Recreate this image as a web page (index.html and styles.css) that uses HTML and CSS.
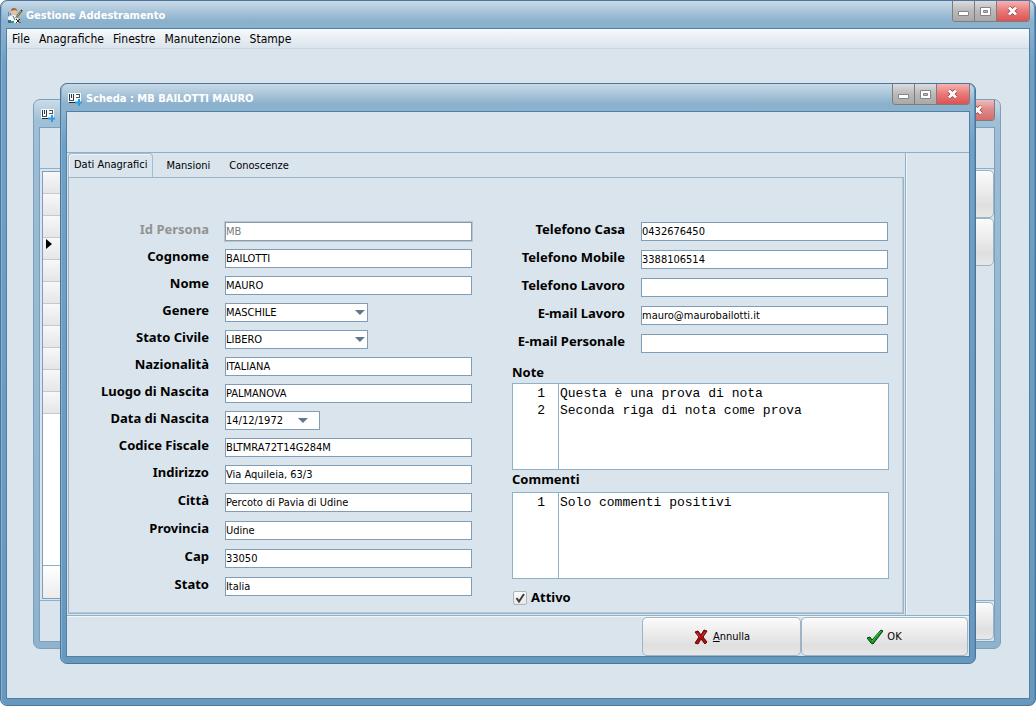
FILE: index.html
```html
<!DOCTYPE html>
<html lang="it">
<head>
    <meta charset="UTF-8">
    <title>Gestione Addestramento</title>
    <link rel="stylesheet" href="styles.css">
</head>
<body>

<div class="window app">
    <div class="title-bar">
        <svg class="title-icon" viewBox="0 0 16 16">
            <circle cx="7" cy="4" r="3" fill="#e9c19c"/>
            <path d="M4 3q0-3 3-3t3 3l-2-1z" fill="#a0673c"/>
            <path d="M3 8l4-1 4 1v7H3z" fill="#f4f7fa"/>
            <path d="M1 9l3-1v7H2z" fill="#fff"/>
            <path d="M15 2L9 10" stroke="#54401c" stroke-width="2"/>
            <path d="M14 3L9 10" stroke="#e0b64a"/>
            <path d="M1 12h3v3H1z" fill="#2a6fb0"/>
            <path d="M4 13h3v2H4z" fill="#3b9a45"/>
            <path d="M6 8l2 4" stroke="#3f6d9c"/>
            <path d="M9 11l4 4M13 11l-4 4" stroke="#23272c"/>
            <path d="M12 14h2v1h-2z" fill="#c23c2c"/>
            <path d="M1 7h1M3 6h1M1 5h1" stroke="#33475a"/>
        </svg>
        <h1 class="title-text">Gestione Addestramento</h1>
        <div class="title-buttons">
            <button class="win-btn" aria-label="Riduci a icona"><svg viewBox="0 0 12 12"><path d="M.5 6.5h10v4H.5z" fill="#fff" stroke="#858585"/></svg></button>
            <button class="win-btn" aria-label="Ingrandisci"><svg viewBox="0 0 12 12"><path d="M.5 2.5h10v8H.5z" fill="#fff" stroke="#858585"/><path d="M3.5 5.5h4v2h-4z" fill="#bbb" stroke="#858585"/></svg></button>
            <button class="win-btn close" aria-label="Chiudi"><svg viewBox="0 0 12 12"><path d="M2 2.5l7 7M9 2.5l-7 7" stroke="#8d3038" stroke-width="4"/><path d="M2 2.5l7 7M9 2.5l-7 7" stroke="#fff" stroke-width="3"/></svg></button>
        </div>
    </div>
    <div class="window-body">
        <nav class="menu-bar">
            <a href="#">File</a>
            <a href="#">Anagrafiche</a>
            <a href="#">Finestre</a>
            <a href="#">Manutenzione</a>
            <a href="#">Stampe</a>
        </nav>

        <div class="desktop">
            <!-- finestra elenco -->
            <div class="window list-window">
                <div class="title-bar">
                    <svg class="title-icon" viewBox="0 0 16 16">
                        <path d="M1 2h13v9H1z" fill="#f7f9fb"/>
                        <path d="M2.5 3v6M4.5 3v4M6.5 3v6" stroke="#2c3844"/>
                        <path d="M2 9.5h5M9 3.5h4M9 6.5h3M12.5 3v4" stroke="#4a545e"/>
                        <path d="M2 11.5h8" stroke="#222c36"/>
                        <path d="M12 8v7M8 11.5h7" stroke="#2a9be0" stroke-width="2"/>
                    </svg>
                    <div class="title-buttons">
                        <button class="win-btn close" aria-label="Chiudi elenco"><svg viewBox="0 0 12 12"><path d="M2 2.5l7 7M9 2.5l-7 7" stroke="#8d3038" stroke-width="4"/><path d="M2 2.5l7 7M9 2.5l-7 7" stroke="#fff" stroke-width="3"/></svg></button>
                    </div>
                </div>
                <div class="window-body">
                    <div class="toolbar"></div>
                    <div class="list-main">
                        <div class="grid-view">
                            <div class="grid-row"></div>
                            <div class="grid-row"></div>
                            <div class="grid-row"></div>
                            <div class="grid-row current"></div>
                            <div class="grid-row"></div>
                            <div class="grid-row"></div>
                            <div class="grid-row"></div>
                            <div class="grid-row"></div>
                            <div class="grid-row"></div>
                            <div class="grid-row"></div>
                            <div class="grid-row"></div>
                            <div class="grid-footer"></div>
                        </div>
                        <div class="side-buttons">
                            <button class="button" aria-label="Nuovo"></button>
                            <button class="button" aria-label="Modifica"></button>
                        </div>
                    </div>
                    <div class="list-footer">
                        <button class="button" aria-label="Esci"></button>
                    </div>
                </div>
            </div>

            <!-- scheda persona -->
            <div class="window card-window">
                <div class="title-bar">
                    <svg class="title-icon" viewBox="0 0 16 16">
                        <path d="M1 2h13v9H1z" fill="#f7f9fb"/>
                        <path d="M2.5 3v6M4.5 3v4M6.5 3v6" stroke="#2c3844"/>
                        <path d="M2 9.5h5M9 3.5h4M9 6.5h3M12.5 3v4" stroke="#4a545e"/>
                        <path d="M2 11.5h8" stroke="#222c36"/>
                        <path d="M12 8v7M8 11.5h7" stroke="#2a9be0" stroke-width="2"/>
                    </svg>
                    <h2 class="title-text">Scheda : MB BAILOTTI MAURO</h2>
                    <div class="title-buttons">
                        <button class="win-btn" aria-label="Riduci scheda"><svg viewBox="0 0 12 12"><path d="M.5 6.5h10v4H.5z" fill="#fff" stroke="#858585"/></svg></button>
                        <button class="win-btn" aria-label="Ingrandisci scheda"><svg viewBox="0 0 12 12"><path d="M.5 2.5h10v8H.5z" fill="#fff" stroke="#858585"/><path d="M3.5 5.5h4v2h-4z" fill="#bbb" stroke="#858585"/></svg></button>
                        <button class="win-btn close" aria-label="Chiudi scheda"><svg viewBox="0 0 12 12"><path d="M2 2.5l7 7M9 2.5l-7 7" stroke="#8d3038" stroke-width="4"/><path d="M2 2.5l7 7M9 2.5l-7 7" stroke="#fff" stroke-width="3"/></svg></button>
                    </div>
                </div>
                <form class="window-body">
                    <div class="toolbar"></div>
                    <div class="card-main">
                        <div class="tabs">
                            <div class="tab-list">
                                <button type="button" class="tab active">Dati Anagrafici</button>
                                <button type="button" class="tab">Mansioni</button>
                                <button type="button" class="tab">Conoscenze</button>
                            </div>
                            <div class="tab-panel">
                                <div class="fields person">
                                    <label class="disabled" for="id">Id Persona</label>
                                    <input id="id" class="readonly" value="MB" disabled>
                                    <label for="cognome">Cognome</label>
                                    <input id="cognome" value="BAILOTTI">
                                    <label for="nome">Nome</label>
                                    <input id="nome" value="MAURO">
                                    <label for="genere">Genere</label>
                                    <div class="combo">
                                        <select id="genere"><option>MASCHILE</option><option>FEMMINILE</option></select>
                                    </div>
                                    <label for="stato-civile">Stato Civile</label>
                                    <div class="combo">
                                        <select id="stato-civile"><option>LIBERO</option><option>CONIUGATO</option></select>
                                    </div>
                                    <label for="nazionalita">Nazionalità</label>
                                    <input id="nazionalita" value="ITALIANA">
                                    <label for="luogo">Luogo di Nascita</label>
                                    <input id="luogo" value="PALMANOVA">
                                    <label for="data">Data di Nascita</label>
                                    <div class="combo date">
                                        <input id="data" value="14/12/1972">
                                    </div>
                                    <label for="cf">Codice Fiscale</label>
                                    <input id="cf" value="BLTMRA72T14G284M">
                                    <label for="indirizzo">Indirizzo</label>
                                    <input id="indirizzo" value="Via Aquileia, 63/3">
                                    <label for="citta">Città</label>
                                    <input id="citta" value="Percoto di Pavia di Udine">
                                    <label for="provincia">Provincia</label>
                                    <input id="provincia" value="Udine">
                                    <label for="cap">Cap</label>
                                    <input id="cap" value="33050">
                                    <label for="stato">Stato</label>
                                    <input id="stato" value="Italia">
                                </div>

                                <div class="right-column">
                                    <div class="fields contacts">
                                        <label for="tel-casa">Telefono Casa</label>
                                        <input id="tel-casa" value="0432676450">
                                        <label for="tel-mobile">Telefono Mobile</label>
                                        <input id="tel-mobile" value="3388106514">
                                        <label for="tel-lavoro">Telefono Lavoro</label>
                                        <input id="tel-lavoro">
                                        <label for="mail-lavoro">E-mail Lavoro</label>
                                        <input id="mail-lavoro" value="mauro@maurobailotti.it">
                                        <label for="mail-personale">E-mail Personale</label>
                                        <input id="mail-personale">
                                    </div>
                                    <label class="memo-label" for="note">Note</label>
                                    <div class="memo">
                                        <div class="line-numbers">1<br>2</div>
                                        <textarea id="note" spellcheck="false">Questa è una prova di nota
Seconda riga di nota come prova</textarea>
                                    </div>
                                    <label class="memo-label" for="commenti">Commenti</label>
                                    <div class="memo">
                                        <div class="line-numbers">1</div>
                                        <textarea id="commenti" spellcheck="false">Solo commenti positivi</textarea>
                                    </div>
                                    <div class="check">
                                        <span class="check-box">
                                            <input type="checkbox" id="attivo" checked>
                                            <svg viewBox="0 0 14 14"><path d="M3.5 7l2.5 3.5L11 3" fill="none" stroke="#3c3c3c" stroke-width="2"/></svg>
                                        </span>
                                        <label for="attivo">Attivo</label>
                                    </div>
                                </div>
                            </div>
                        </div>
                        <div class="side-panel"></div>
                    </div>
                    <div class="card-footer">
                        <button type="button" class="button">
                            <svg viewBox="0 0 16 16"><path d="M2 3l3-1 3 4 3-5 3 1-4 6 4 5-2 2-4-5-3 5-3-1 4-6z" fill="#b00d0d" stroke="#5c0808" stroke-linejoin="round"/><path d="M4 4l3 4M12 3L9 7" stroke="#d93a3a"/></svg>
                            <span><u>A</u>nnulla</span>
                        </button>
                        <button type="button" class="button ok">
                            <svg viewBox="0 0 16 16"><path d="M0 9l3-1 2 3 9-10 2 1-10 13-2-1z" fill="#0fa01a" stroke="#0a3a1c" stroke-linejoin="round"/><path d="M5 12l9-10" stroke="#35c936"/></svg>
                            <span>OK</span>
                        </button>
                    </div>
                </form>
            </div>
        </div>
    </div>
</div>

</body>
</html>
```
FILE: styles.css
```css
* {
    box-sizing: border-box;
}

body {
    margin: 0;
    background: #fff;
    font-family: "DejaVu Sans Condensed", "DejaVu Sans", sans-serif;
    font-size: 11px;
    color: #000;
}

button, input, select {
    font: inherit;
    color: inherit;
}

/* finestre */
.window {
    display: flex;
    flex-direction: column;
    padding: 0 5px 6px;
    border: 1px solid #4a769e;
    border-radius: 7px;
    background: linear-gradient(#c9dae7, #8bb1cd 20px, #8bb1cd 28px, #70a0c4 60px, #6998bd);
    box-shadow: inset 1px 0 #86b0cf, inset -1px 0 #5d8fb6;
}

.title-bar {
    display: flex;
    align-items: center;
    height: 27px;
    padding-left: 1px;
}

.title-icon {
    width: 16px;
    height: 16px;
    margin-top: 3px;
}

.title-text {
    flex: 1;
    margin: 2px 0 0 3px;
    font-size: 11px;
    font-weight: bold;
    color: #fff;
}

.title-buttons {
    display: flex;
    align-self: flex-start;
    margin-left: auto;
    border: 1px solid #7d7d7d;
    border-top: 0;
    border-radius: 0 0 4px 4px;
    overflow: hidden;
}

.win-btn {
    display: flex;
    align-items: center;
    justify-content: center;
    width: 22px;
    height: 20px;
    padding: 0;
    border: 0;
    border-right: 1px solid #7d7d7d;
    background: linear-gradient(#dcdcdc, #b9b9b9 50%, #a9a9a9);
}

.win-btn svg {
    width: 12px;
    height: 12px;
}

.win-btn.close {
    width: 32px;
    border-right: 0;
    background: linear-gradient(#f7b3b3, #ea7878 50%, #dd5353);
}

.window-body {
    display: flex;
    flex: 1;
    flex-direction: column;
    border: 1px solid #4f80a8;
    background: #dae4ec;
}

.app {
    min-height: 100vh;
}

/* menu */
.menu-bar {
    display: flex;
    gap: 9px;
    height: 20px;
    padding: 0 5px;
    border-bottom: 1px solid #ccd6de;
    background: linear-gradient(#f7f9fb, #dae4ec);
    font-size: 12px;
    line-height: 20px;
}

.menu-bar a {
    color: #000;
    text-decoration: none;
}

.desktop {
    position: relative;
    flex: 1;
    min-height: 640px;
}

.list-window {
    position: absolute;
    top: 50px;
    left: 26px;
    right: 28px;
    height: 550px;
    border-color: #7d9fbc;
    background: linear-gradient(#ccdce8, #a0c0d6 20px, #9bbcd4 60px, #8fb2cd);
    box-shadow: none;
}

.list-window .window-body {
    border-color: #7ba0bd;
}

.list-window .close {
    background: linear-gradient(#eebcbc, #de8787 50%, #d56b6b);
}

.card-window {
    position: absolute;
    top: 34px;
    left: 53px;
    right: 53px;
}

.toolbar {
    height: 41px;
    border-bottom: 1px solid #8fb0c9;
}

/* elenco */
.list-main {
    display: flex;
    flex: 1;
    justify-content: space-between;
    padding: 1px 0 1px 2px;
    border-bottom: 1px solid #8fb0c9;
}

.grid-view {
    display: flex;
    flex-direction: column;
    width: 60%;
    margin-top: 1px;
    border: 1px solid #7ba0bd;
    background: #fff;
}

.grid-row {
    height: 22px;
    border-bottom: 1px solid #c8c8c8;
    background: linear-gradient(#f8f8f8, #e6e6e6);
}

.grid-row.current::before {
    content: "";
    display: block;
    width: 6px;
    height: 10px;
    margin: 1px 3px;
    background: #000;
    clip-path: polygon(0 0, 100% 50%, 0 100%);
}

.grid-footer {
    height: 33px;
    margin-top: auto;
    border-top: 1px solid #8fb0c9;
    background: linear-gradient(#fff, #ececec);
}

.side-buttons {
    display: flex;
    flex-direction: column;
}

.side-buttons .button {
    height: 48px;
}

.list-footer {
    display: flex;
    justify-content: flex-end;
    height: 40px;
    padding: 1px 0;
}

.button {
    display: flex;
    align-items: center;
    justify-content: center;
    gap: 4px;
    width: 159px;
    padding: 0;
    border: 1px solid #9db4c6;
    border-radius: 5px;
    background: linear-gradient(#fbfbfb, #e9e9e9 50%, #dfdfdf 75%, #e8e8e8);
    box-shadow: inset 0 1px #fff;
}

.button svg {
    width: 16px;
    height: 16px;
}

/* scheda */
.card-main {
    display: flex;
}

.side-panel {
    width: 64px;
    border-left: 1px solid #8fb0c9;
    box-shadow: inset 1px 0 #f2f6f9;
}

.tabs {
    flex: 1;
    padding: 0 1px 1px;
}

.tab-list {
    display: flex;
    height: 24px;
}

.tab {
    padding: 0 5px;
    margin-right: 7px;
    border: 1px solid transparent;
    background: none;
}

.tab.active {
    padding-bottom: 2px;
    border: 1px solid #a5bccd;
    border-bottom: 0;
    border-radius: 4px 4px 0 0;
    box-shadow: inset 1px 1px #eef3f7;
}

.tab-panel {
    display: flex;
    justify-content: space-between;
    padding: 44px 14px 8px 32px;
    border: 1px solid #9db4c6;
    box-shadow: inset -1px -1px #b9cad7;
}

.fields {
    display: grid;
    grid-template-columns: max-content minmax(0, 247px);
    gap: 8px 16px;
    align-items: start;
}

.person {
    grid-template-rows: repeat(9, 19px) repeat(5, 20px);
}

.contacts {
    grid-template-rows: repeat(5, 20px);
    justify-content: end;
    padding-right: 1px;
}

label {
    font-family: "Noto Sans", sans-serif;
    font-size: 13px;
    font-weight: bold;
    line-height: 15px;
}

.fields label {
    text-align: right;
}

label.disabled {
    color: #929292;
}

.fields input, .fields select {
    width: 100%;
    height: 19px;
    padding: 0;
    border: 1px solid #7f9db9;
    border-radius: 0;
    background: #fff;
    appearance: none;
}

.fields .readonly {
    color: #7a7a7a;
    box-shadow: 0 0 0 1px #c0c4c8;
}

.combo {
    position: relative;
    width: 143px;
    height: 19px;
}

.combo.date {
    width: 95px;
}

.combo::after {
    content: "";
    position: absolute;
    top: 7px;
    right: 3px;
    width: 10px;
    height: 5px;
    background: #5f788c;
    clip-path: polygon(0 0, 100% 0, 50% 100%);
    pointer-events: none;
}

.combo.date::after {
    right: 12px;
}

.right-column {
    display: flex;
    flex-direction: column;
    width: 377px;
}

.memo-label {
    margin: 11px 0 3px;
}

.memo + .memo-label {
    margin: 2px 0 5px;
}

.memo {
    display: flex;
    height: 87px;
    border: 1px solid #8fb0c9;
    background: #fff;
    font: 13px/17px "Liberation Mono", monospace;
}

.line-numbers {
    width: 46px;
    padding: 1px 13px 0 0;
    border-right: 1px solid #8fb0c9;
    text-align: right;
}

.memo textarea {
    flex: 1;
    padding: 1px;
    border: 0;
    background: none;
    font: inherit;
    resize: none;
}

.check {
    display: flex;
    align-items: center;
    gap: 4px;
    margin-top: 11px;
    padding-left: 1px;
}

.check-box {
    display: grid;
    width: 14px;
    height: 14px;
}

.check-box input, .check-box svg {
    grid-area: 1 / 1;
    width: 14px;
    height: 14px;
    margin: 0;
    pointer-events: none;
}

.check-box input {
    border: 1px solid #b4b4b4;
    border-radius: 2px;
    background: linear-gradient(#fdfdfd, #e6e6e6);
    appearance: none;
    pointer-events: auto;
}

.check-box input:not(:checked) + svg {
    display: none;
}

.card-footer {
    display: flex;
    justify-content: flex-end;
    height: 41px;
    padding: 1px 1px 0 0;
    border-top: 1px solid #8fb0c9;
    box-shadow: inset 0 1px #f2f6f9;
}

.card-footer .ok {
    width: 167px;
}
```
